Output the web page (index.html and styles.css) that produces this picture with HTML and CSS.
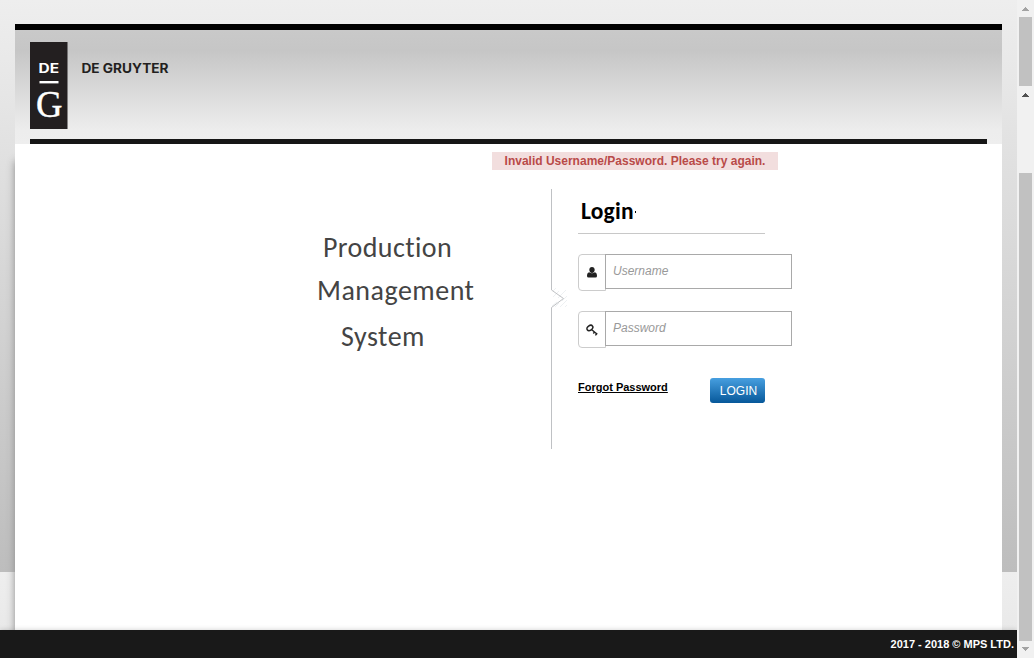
FILE: index.html
```
<!DOCTYPE html>
<html lang="en">
<head>
<meta charset="utf-8">
<title>De Gruyter - Login</title>
<link rel="stylesheet" href="styles.css">
</head>
<body>
<div class="window">
  <div class="page">
    <div class="shell">
      <header class="header">
        <div class="brand">
          <svg class="logo" width="140" height="87" viewBox="0 0 140 87">
            <rect width="37.500" height="87" fill="#231f20"/>
            <text class="logo-de" x="8.500" y="31.300" textLength="20.500" lengthAdjust="spacingAndGlyphs">DE</text>
            <rect x="9.500" y="39" width="19" height="2.400" fill="#fff"/>
            <text class="logo-g" x="6" y="74.500" textLength="26.500" lengthAdjust="spacingAndGlyphs">G</text>
            <text class="logo-name" x="51.500" y="31" textLength="87" lengthAdjust="spacingAndGlyphs">DE GRUYTER</text>
          </svg>
        </div>
        <div class="rule"></div>
      </header>
      <main class="content">
        <div class="alert">Invalid Username/Password. Please try again.</div>
        <div class="columns">
          <div class="title">
            <span class="production">Production</span>
            <span class="management">Management</span>
            <span class="system">System</span>
          </div>
          <svg class="divider" width="18" height="260" viewBox="0 0 18 260" fill="none">
            <path d="M3 102l3-3M3 108l6-6M8 109l8-8M12 112l5-5M2 117l5-4M5 118l4-4M10 118l7-7M15 118l2-2" stroke="#edf0f2"/>
            <path d="M1.500 0V101L13.500 109.500L1.500 118.500V260" stroke="#bfc1c4"/>
          </svg>
          <form class="login">
            <h1 class="heading">Login<span class="dot"></span></h1>
            <div class="field">
              <span class="addon"><svg width="10" height="11" viewBox="0 0 10 11"><path fill="#222" d="M5 0C6.700 0 7.700 1.100 7.700 2.800C7.700 4.600 6.600 6 5 6S2.300 4.600 2.300 2.800C2.300 1.100 3.300 0 5 0ZM2.200 5.200Q5 7.500 7.800 5.200C9.500 5.500 10 7 10 9Q10 10.500 8.500 10.500H1.500Q0 10.500 0 9C0 7 .5 5.500 2.200 5.200Z"/></svg></span>
              <input class="input" type="text" placeholder="Username">
            </div>
            <div class="field">
              <span class="addon"><svg width="12" height="12" viewBox="0 0 12 12" fill="none" stroke="#222"><ellipse cx="3.900" cy="3.900" rx="3.200" ry="2.300" transform="rotate(-35 3.900 3.900)" stroke-width="1.500"/><path d="M5.500 5.500L10.600 9.700M7.300 9.500L8.700 7.700M9.400 11.400L11.200 9.300" stroke-width="1.400"/></svg></span>
              <input class="input" type="password" placeholder="Password">
            </div>
            <div class="actions">
              <a class="forgot" href="#">Forgot Password</a>
              <button class="submit" type="button">LOGIN</button>
            </div>
          </form>
        </div>
      </main>
    </div>
    <footer class="footer">2017 - 2018 © MPS LTD.</footer>
  </div>
  <div class="scrollbar">
    <svg class="arrow-top" width="7" height="4" viewBox="0 0 7 4"><path d="M3 0h1v1h1v1h1v1h1v1H0V3h1V2h1V1h1z" fill="#a3a3a3"/></svg>
    <div class="thumb-top"></div>
    <svg class="arrow-mid" width="7" height="4" viewBox="0 0 7 4"><path d="M3 0h1v1h1v1h1v1h1v1H0V3h1V2h1V1h1z" fill="#505050"/></svg>
    <div class="thumb-main"></div>
    <svg class="arrow-end" width="7" height="4" viewBox="0 0 7 4"><path d="M0 0h7v1H6v1H5v1H4v1H3V3H2V2H1V1H0z" fill="#a3a3a3"/></svg>
  </div>
</div>
</body>
</html>
```
FILE: styles.css
```
* { box-sizing: border-box; }
body {
  margin: 0;
  overflow: hidden;
  font-family: "Liberation Sans", Arial, sans-serif;
}
.window { display: flex; height: 658px; }
.page {
  width: 1017px;
  display: flex;
  flex-direction: column;
  background: linear-gradient(#eee, #bdbdbd) 0 0 / 100% 572px repeat-y;
}
.shell {
  flex: 1;
  display: flex;
  flex-direction: column;
  margin: 24px 15px 0;
}
.header {
  height: 120px;
  padding: 12px 15px 0;
  border-top: 6px solid #000;
  background: linear-gradient(#c9c9c9 0, #c6c6c6 18%, #ededed 88%, #eee 100%);
}
.brand { display: flex; height: 97px; }
.logo { display: block; }
.logo-de { font: 700 12.500px Inter, sans-serif; fill: #fff; }
.logo-g { font: 37px "Liberation Serif", serif; fill: #fff; stroke: #fff; stroke-width: 0.400px; }
.logo-name { font: 700 12.500px Inter, sans-serif; fill: #231f20; }
.rule { height: 5px; background: #161616; }
.content {
  flex: 1;
  padding-top: 8px;
  background: #fff;
  box-shadow: -6px 11px 8px -6px #8c8c8c;
}
.alert {
  width: 286px;
  height: 18px;
  margin-left: 477px;
  background: #f2dede;
  color: #b94a48;
  font-size: 12px;
  font-weight: 700;
  line-height: 18px;
  text-align: center;
  white-space: nowrap;
}
.columns {
  display: grid;
  grid-template-columns: 535px 18px 214px;
  margin-top: 19px;
}
.title {
  display: flex;
  flex-direction: column;
  padding-top: 41px;
  color: #444;
  font: 28px/36px Carlito, "Open Sans", sans-serif;
  letter-spacing: 0.500px;
}
.production { margin-left: 308px; letter-spacing: 0.400px; }
.management { margin: 7px 0 0 302px; }
.system { margin: 10px 0 0 326px; }
.divider { display: block; }
.login { padding-left: 10px; width: 224px; }
.heading {
  display: flex;
  align-items: center;
  width: 187px;
  height: 45px;
  margin: 0 0 20px;
  padding: 1px 0 0 3px;
  border-bottom: 1px solid #c8c8c8;
  color: #000;
  font: 700 23.500px/43px Carlito, "Open Sans", sans-serif;
  letter-spacing: 0.200px;
}
.dot { width: 1px; height: 2px; margin-left: 1px; background: #000; }
.field { display: flex; height: 37px; margin-bottom: 20px; }
.addon {
  width: 28px;
  height: 37px;
  display: flex;
  align-items: center;
  justify-content: center;
  border: 1px solid #ccc;
  border-radius: 4px 0 0 4px;
}
.input {
  width: 187px;
  height: 35px;
  margin-left: -1px;
  padding: 0 7px 1px;
  border: 1px solid #a9a9a9;
  border-radius: 0;
  background: #fff;
  font: 12px "Liberation Sans", Arial, sans-serif;
}
.input::placeholder { color: #999; font-style: italic; opacity: 1; }
.actions { display: flex; margin-top: 30px; }
.forgot {
  width: 132px;
  padding-top: 3px;
  color: #000;
  font-size: 11px;
  font-weight: 700;
  line-height: 13px;
}
.submit {
  width: 55px;
  height: 25px;
  padding: 1px 0 0 2px;
  border: 0;
  border-radius: 3px;
  background: linear-gradient(#479fe0, #07589a);
  color: #fff;
  font: 12px/24px "Liberation Sans", Arial, sans-serif;
}
.footer {
  height: 28px;
  padding-right: 3px;
  background: #191919;
  box-shadow: 0 0 5px rgba(0, 0, 0, 0.2);
  color: #fff;
  font-size: 11px;
  font-weight: 700;
  line-height: 28px;
  text-align: right;
}
.scrollbar {
  width: 17px;
  display: flex;
  flex-direction: column;
  align-items: center;
  background: #f1f1f1;
}
.arrow-top { margin-top: 7px; }
.thumb-top { width: 13px; height: 69px; margin-top: 6px; background: #c1c1c1; }
.arrow-mid { margin-top: 7px; }
.thumb-main { width: 13px; height: 468px; margin-top: 76px; background: #c1c1c1; }
.arrow-end { margin-top: 6px; }
```
